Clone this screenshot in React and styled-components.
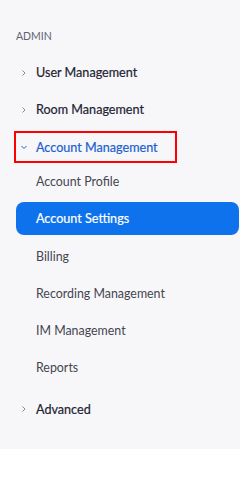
import styled, { createGlobalStyle } from "styled-components";

const Global = createGlobalStyle`
  body {
    margin: 0;
    background: #ffffff;
    font-family: Lato, "Open Sans", sans-serif;
  }
`;

const Sidebar = styled.nav`
  background: #f7f7fa;
  height: 449px;
  box-sizing: border-box;
  padding: 26px 1px 0 0;
  display: flex;
  flex-direction: column;
`;

const Section = styled.div`
  font-size: 10.5px;
  color: #5f6370;
  padding-left: 16px;
  height: 20px;
  line-height: 20px;
  margin-bottom: 8px;
`;

const Row = styled.div`
  display: flex;
  align-items: center;
  height: ${(p) => p.h || 37}px;
  padding-left: 20px;
  font-size: ${(p) => (p.sub ? 12.4 : 12.6)}px;
  color: ${(p) => (p.sub ? "#45454f" : "#232333")};
  -webkit-text-stroke: ${(p) => (p.sub ? 0 : 0.2)}px currentColor;
`;

const Boxed = styled.div`
  margin: 3px 0 1px 14px;
  width: 163px;
  height: 32px;
  box-sizing: border-box;
  border: 2px solid #ff0000;
  display: flex;
  align-items: center;
  padding-left: 4px;
  font-size: 12.6px;
  color: #1d5fcf;
  -webkit-text-stroke: 0.2px currentColor;
`;

const Chevron = styled.svg`
  width: 8px;
  height: 8px;
  margin-right: 8px;
  flex: none;
`;

const Label = styled.span`
  padding-left: 16px;
`;

const Pill = styled.div`
  margin: 4px 0 3px 16px;
  height: 33px;
  border-radius: 8px;
  background: #0e72ed;
  color: #ffffff;
  font-size: 12.6px;
  -webkit-text-stroke: 0.2px currentColor;
  display: flex;
  align-items: center;
  padding-left: 20px;
`;

const Arrow = ({ down }) => (
  <Chevron viewBox="0 0 8 8">
    {down ? (
      <polyline points="1.5,3 4,5.5 6.5,3" fill="none" stroke="#1d5fcf" strokeWidth="1" />
    ) : (
      <polyline points="2.5,1.5 5,4 2.5,6.5" fill="none" stroke="#8a8a94" strokeWidth="1" />
    )}
  </Chevron>
);

const subItems = ["Billing", "Recording Management", "IM Management", "Reports"];

const App = () => {
  return (
    <>
      <Global />
      <Sidebar>
        <Section>ADMIN</Section>
        <Row>
          <Arrow />
          User Management
        </Row>
        <Row>
          <Arrow />
          Room Management
        </Row>
        <Boxed>
          <Arrow down />
          Account Management
        </Boxed>
        <Row sub h={34}>
          <Label>Account Profile</Label>
        </Row>
        <Pill>Account Settings</Pill>
        {subItems.map((s) => (
          <Row sub key={s}>
            <Label>{s}</Label>
          </Row>
        ))}
        <Row h={46}>
          <Arrow />
          Advanced
        </Row>
      </Sidebar>
    </>
  );
};

export default App;
